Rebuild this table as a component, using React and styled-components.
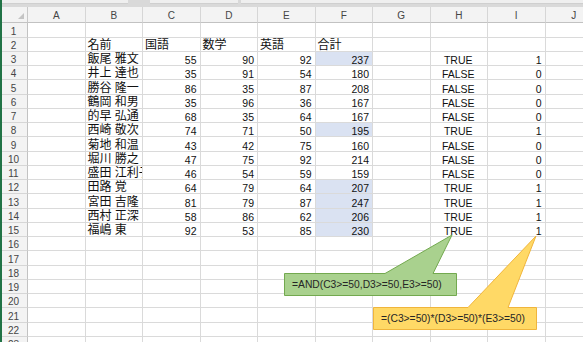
import React from 'react';
import styled, { createGlobalStyle } from 'styled-components';

const GlobalStyle = createGlobalStyle`
  html, body {
    margin: 0;
    padding: 0;
    background: #ffffff;
    overflow: hidden;
  }
`;

const COLUMNS = ['A', 'B', 'C', 'D', 'E', 'F', 'G', 'H', 'I', 'J'];
const SUBJECTS = ['名前', '国語', '数学', '英語', '合計'];

const students = [
  ['飯尾 雅文', 55, 90, 92],
  ['井上 達也', 35, 91, 54],
  ['勝谷 隆一', 86, 35, 87],
  ['鶴岡 和男', 35, 96, 36],
  ['的早 弘通', 68, 35, 64],
  ['西崎 敬次', 74, 71, 50],
  ['菊地 和温', 43, 42, 75],
  ['堀川 勝之', 47, 75, 92],
  ['盛田 江利子', 46, 54, 59],
  ['田路 覚', 64, 79, 64],
  ['宮田 吉隆', 81, 79, 87],
  ['西村 正深', 58, 86, 62],
  ['福嶋 東', 92, 53, 85],
];

const ROW_COUNT = 23;
const FIRST_DATA_ROW = 3;

const Page = styled.div`
  position: relative;
  width: 583px;
  height: 342px;
  overflow: hidden;
  border-left: 2px solid #217346;
  box-sizing: border-box;
  font-family: "Liberation Sans", "Noto Sans CJK JP", sans-serif;
`;

const TopStrip = styled.div`
  display: flex;
  height: 7px;
  background: #d9d9d9;
  align-items: flex-start;
`;

const StripSegment = styled.div`
  height: 3px;
  width: ${(p) => p.$width}px;
  flex: ${(p) => (p.$grow ? 1 : 'none')};
  margin-right: ${(p) => p.$gap || 0}px;
  background: #efefef;
  border-bottom: 1px solid #cfcfcf;
`;

const Sheet = styled.div`
  display: grid;
  grid-template-columns: 26px repeat(10, 57.5px);
  grid-template-rows: 16.3px;
  grid-auto-rows: 14.25px;
`;

const Corner = styled.div`
  position: relative;
  background: #f3f3f3;
  border-right: 1px solid #c8c8c8;
  border-bottom: 1px solid #c2c2c2;
  box-sizing: border-box;

  &::after {
    content: '';
    position: absolute;
    right: 3px;
    bottom: 3px;
    border-style: solid;
    border-width: 0 0 6px 6px;
    border-color: transparent transparent #c4c4c4 transparent;
  }
`;

const ColHeader = styled.div`
  display: flex;
  align-items: center;
  justify-content: center;
  padding-top: 1px;
  background: #f3f3f3;
  border-right: 1px solid #d6d6d6;
  border-bottom: 1px solid #c2c2c2;
  box-sizing: border-box;
  font-size: 10px;
  color: #454545;
`;

const RowHeader = styled.div`
  display: flex;
  align-items: flex-end;
  justify-content: center;
  padding-right: 2px;
  background: #f3f3f3;
  border-right: 1px solid #c2c2c2;
  border-bottom: 1px solid #d6d6d6;
  box-sizing: border-box;
  font-size: 10px;
  line-height: 10px;
  color: #454545;
`;

const Cell = styled.div`
  display: flex;
  align-items: flex-end;
  justify-content: ${(p) =>
    p.$align === 'right' ? 'flex-end' : p.$align === 'center' ? 'center' : 'flex-start'};
  padding: 0 3px 0 2px;
  background: ${(p) => (p.$fill ? '#dae2f2' : '#ffffff')};
  border-right: 1px solid #dadada;
  border-bottom: 1px solid #dadada;
  box-sizing: border-box;
  overflow: hidden;
  white-space: nowrap;
  font-size: ${(p) => (p.$cjk ? '12px' : '10.5px')};
  line-height: ${(p) => (p.$cjk ? '11px' : '10px')};
  color: #111111;
`;

const Overlay = styled.svg`
  position: absolute;
  top: 0;
  left: -2px;
  pointer-events: none;
`;

const CalloutText = styled.div`
  position: absolute;
  left: ${(p) => p.$left}px;
  top: ${(p) => p.$top}px;
  width: ${(p) => p.$width}px;
  height: ${(p) => p.$height}px;
  display: flex;
  align-items: center;
  padding-left: 8px;
  box-sizing: border-box;
  font-size: 10.3px;
  color: #262626;
  white-space: nowrap;
`;

function cellsForRow(row) {
  const cells = COLUMNS.map(() => ({ text: '' }));
  if (row === 2) {
    SUBJECTS.forEach((label, i) => {
      cells[i + 1] = { text: label, cjk: true };
    });
  }
  const student = students[row - FIRST_DATA_ROW];
  if (student) {
    const [name, jp, math, en] = student;
    const total = jp + math + en;
    const pass = jp >= 50 && math >= 50 && en >= 50;
    cells[1] = { text: name, cjk: true };
    cells[2] = { text: jp, align: 'right' };
    cells[3] = { text: math, align: 'right' };
    cells[4] = { text: en, align: 'right' };
    cells[5] = { text: total, align: 'right', fill: pass };
    cells[7] = { text: pass ? 'TRUE' : 'FALSE', align: 'center' };
    cells[8] = { text: pass ? 1 : 0, align: 'right' };
  }
  return cells;
}

function Callouts() {
  return (
    <>
      <Overlay width="583" height="342" viewBox="0 0 583 342">
        <path
          d="M284.5 273.5 L385 273.5 L452 235 L433 273.5 L456.5 273.5 L456.5 295.5 L284.5 295.5 Z"
          fill="#a9d18e"
          stroke="#73a94f"
          strokeWidth="1"
        />
        <path
          d="M373.5 307.5 L468 307.5 L536 236 L508 307.5 L536.5 307.5 L536.5 329.5 L373.5 329.5 Z"
          fill="#ffd966"
          stroke="#f0b53c"
          strokeWidth="1"
        />
      </Overlay>
      <CalloutText $left={282} $top={274} $width={172} $height={21}>
        =AND(C3&gt;=50,D3&gt;=50,E3&gt;=50)
      </CalloutText>
      <CalloutText $left={371} $top={308} $width={165} $height={21}>
        =(C3&gt;=50)*(D3&gt;=50)*(E3&gt;=50)
      </CalloutText>
    </>
  );
}

export default function App() {
  const rows = Array.from({ length: ROW_COUNT }, (_, i) => i + 1);

  return (
    <Page>
      <GlobalStyle />
      <TopStrip>
        <StripSegment $width={126} $gap={22} />
        <StripSegment $width={88} $gap={3} />
        <StripSegment $grow />
      </TopStrip>
      <Sheet>
        <Corner />
        {COLUMNS.map((col) => (
          <ColHeader key={col}>{col}</ColHeader>
        ))}
        {rows.map((row) => (
          <React.Fragment key={row}>
            <RowHeader>{row}</RowHeader>
            {cellsForRow(row).map((cell, i) => (
              <Cell key={i} $align={cell.align} $fill={cell.fill} $cjk={cell.cjk}>
                {cell.text}
              </Cell>
            ))}
          </React.Fragment>
        ))}
      </Sheet>
      <Callouts />
    </Page>
  );
}
